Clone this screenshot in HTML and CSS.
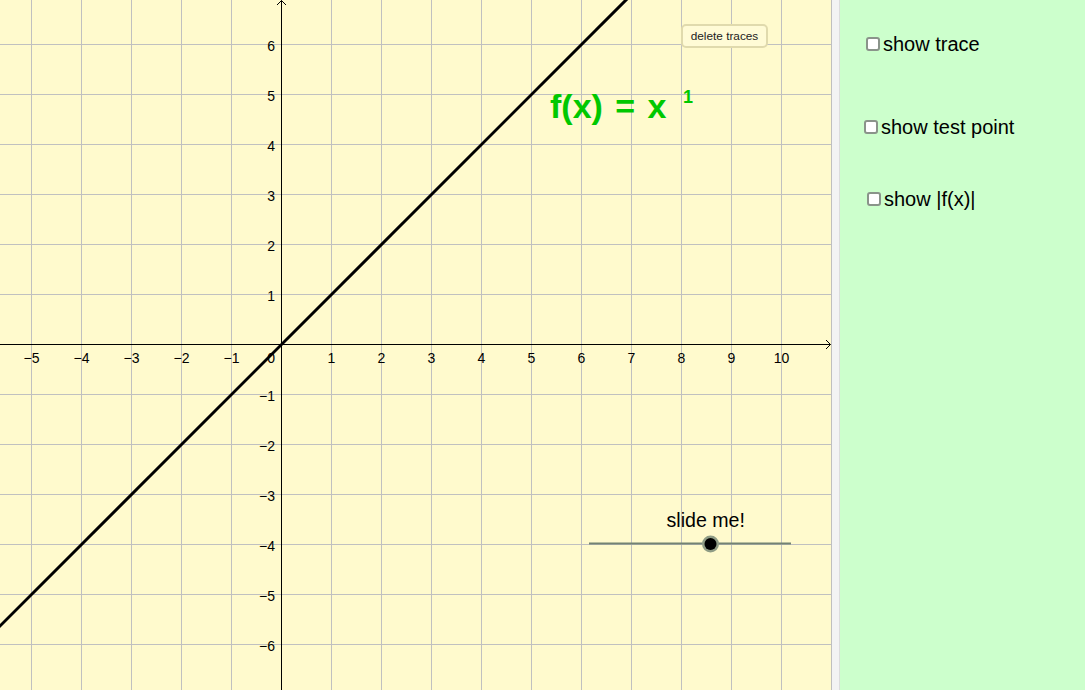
FILE: index.html
```html
<!DOCTYPE html>
<html>
<head>
<meta charset="utf-8">
<link rel="stylesheet" href="styles.css">
</head>
<body>
<div class="app">
  <div class="graph">
    <svg class="canvas" width="831" height="690" viewBox="0 0 831 690">
      <path class="grid" d="M31.5 0V690M81.5 0V690M131.5 0V690M181.5 0V690M231.5 0V690M331.5 0V690M381.5 0V690M431.5 0V690M481.5 0V690M531.5 0V690M581.5 0V690M631.5 0V690M681.5 0V690M731.5 0V690M781.5 0V690M0 44.5H831M0 94.5H831M0 144.5H831M0 194.5H831M0 244.5H831M0 294.5H831M0 394.5H831M0 444.5H831M0 494.5H831M0 544.5H831M0 594.5H831M0 644.5H831"/>
      <path class="axis" d="M281.5 690V0.5M0 344.5H830.5M277 5L281.5 0.5L286 5M826 340L830.5 344.5L826 349"/>
      <g class="lbl xl">
        <text x="31.5" y="363">−5</text>
        <text x="81.5" y="363">−4</text>
        <text x="131.5" y="363">−3</text>
        <text x="181.5" y="363">−2</text>
        <text x="231.5" y="363">−1</text>
        <text x="331.5" y="363">1</text>
        <text x="381.5" y="363">2</text>
        <text x="431.5" y="363">3</text>
        <text x="481.5" y="363">4</text>
        <text x="531.5" y="363">5</text>
        <text x="581.5" y="363">6</text>
        <text x="631.5" y="363">7</text>
        <text x="681.5" y="363">8</text>
        <text x="731.5" y="363">9</text>
        <text x="781.5" y="363">10</text>
      </g>
      <g class="lbl yl">
        <text x="275" y="363">0</text>
        <text x="275" y="50.5">6</text>
        <text x="275" y="100.5">5</text>
        <text x="275" y="150.5">4</text>
        <text x="275" y="200.5">3</text>
        <text x="275" y="250.5">2</text>
        <text x="275" y="300.5">1</text>
        <text x="275" y="400.5">−1</text>
        <text x="275" y="450.5">−2</text>
        <text x="275" y="500.5">−3</text>
        <text x="275" y="550.5">−4</text>
        <text x="275" y="600.5">−5</text>
        <text x="275" y="650.5">−6</text>
      </g>
      <line class="fn" x1="-2" y1="628" x2="628" y2="-2"/>
      <text class="formula" x="550" y="118">f(x) = x</text>
      <text class="expo" x="683" y="103">1</text>
      <text class="slidecap" x="666.5" y="526.5">slide me!</text>
      <line class="track" x1="589" y1="543.5" x2="791" y2="543.5"/>
      <circle class="knob-ring" cx="710.5" cy="544" r="8.5"/>
      <circle class="knob" cx="710.5" cy="544" r="6"/>
    </svg>
    <button class="btn-delete">delete traces</button>
  </div>
  <div class="splitter"></div>
  <div class="panel">
    <label class="opt opt-trace"><input type="checkbox" class="cb"><span>show trace</span></label>
    <label class="opt opt-point"><input type="checkbox" class="cb"><span>show test point</span></label>
    <label class="opt opt-abs"><input type="checkbox" class="cb"><span>show |f(x)|</span></label>
  </div>
</div>
</body>
</html>
```

FILE: styles.css
```css
html, body {
  margin: 0;
  padding: 0;
  width: 1085px;
  height: 690px;
  overflow: hidden;
  background: #ffffff;
  font-family: "Liberation Sans", Arial, sans-serif;
}

.app {
  display: flex;
  width: 1085px;
  height: 690px;
}

.graph {
  position: relative;
  width: 831px;
  height: 690px;
  flex: 0 0 auto;
  background: #fffacd;
  border-right: 1px solid #bfbfbf;
}

.canvas {
  display: block;
}

.grid {
  stroke: #c0c0c0;
  stroke-width: 1;
  fill: none;
}

.axis {
  stroke: #000;
  stroke-width: 1;
  fill: none;
}

.lbl {
  font-family: "Liberation Sans", Arial, sans-serif;
  font-size: 14px;
  fill: #000;
}

.xl {
  text-anchor: middle;
}

.yl {
  text-anchor: end;
}

.fn {
  stroke: #000;
  stroke-width: 3;
}

.formula {
  font-family: "Liberation Sans", Arial, sans-serif;
  font-weight: bold;
  font-size: 34px;
  word-spacing: 3px;
  fill: #00c800;
}

.expo {
  font-family: "Liberation Sans", Arial, sans-serif;
  font-weight: bold;
  font-size: 18px;
  fill: #00c800;
}

.slidecap {
  font-family: "Liberation Sans", Arial, sans-serif;
  font-size: 19.6px;
  fill: #000;
}

.track {
  stroke: #738273;
  stroke-width: 2;
}

.knob-ring {
  fill: #8f9c85;
}

.knob {
  fill: #000;
}

.btn-delete {
  position: absolute;
  left: 681px;
  top: 24px;
  width: 87px;
  height: 24px;
  margin: 0;
  padding: 0;
  box-sizing: border-box;
  border: 2px solid #e0daad;
  border-radius: 5px;
  background: #fffbd6;
  color: #222;
  font-family: "Liberation Sans", Arial, sans-serif;
  font-size: 11.8px;
  line-height: 20px;
  text-align: center;
}

.splitter {
  width: 7px;
  flex: 0 0 auto;
  background: #f3f3f3;
  border-right: 1px solid #dcdcdc;
}

.panel {
  flex: 1 1 auto;
  background: #ccffcc;
  display: flex;
  flex-direction: column;
  align-items: flex-start;
  padding-top: 34px;
}

.opt {
  display: flex;
  align-items: center;
  height: 20px;
  line-height: 20px;
  font-size: 20px;
  color: #000;
}

.opt-trace {
  margin-left: 26px;
}

.opt-point {
  margin-left: 24px;
  margin-top: 63px;
}

.opt-abs {
  margin-left: 27px;
  margin-top: 52px;
}

.cb {
  appearance: none;
  -webkit-appearance: none;
  width: 14px;
  height: 14px;
  margin: 0 3px 0 0;
  box-sizing: border-box;
  border: 2px solid #8a948a;
  border-radius: 3px;
  background: #ffffff;
}
```
